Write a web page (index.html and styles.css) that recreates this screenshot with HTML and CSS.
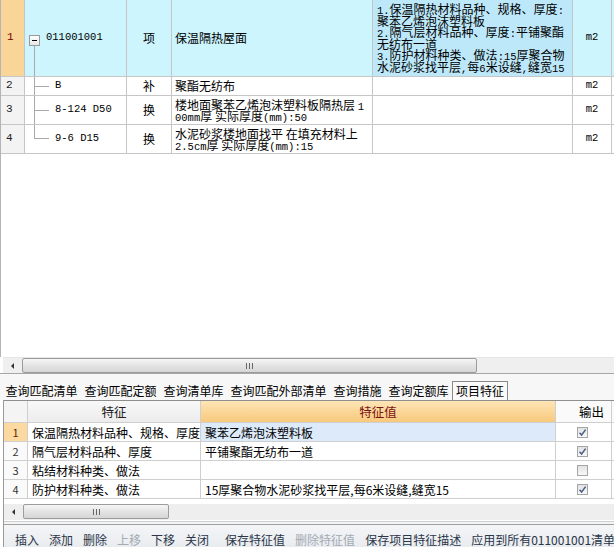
FILE: index.html
```html
<!DOCTYPE html>
<html lang="zh-CN">
<head>
<meta charset="utf-8">
<title>项目特征</title>
<link rel="stylesheet" href="styles.css">
</head>
<body>
<div class="win">
  <div class="upper">
    <div class="grid1">
      <div class="c num r1 hl">1</div>
      <div class="c code r1 sel"><span class="tree first"><span class="box"></span></span><span class="en">011001001</span></div>
      <div class="c type r1 sel">项</div>
      <div class="c name r1 sel">保温隔热屋面</div>
      <div class="c feat r1 selv"><div class="txt"><span class="en">1.</span>保温隔热材料品种、规格、厚度<span class="en">:</span><br>聚苯乙烯泡沫塑料板<br><span class="en">2.</span>隔气层材料品种、厚度<span class="en">:</span>平铺聚酯<br>无纺布一道<br><span class="en">3.</span>防护材料种类、做法<span class="en">:15</span>厚聚合物<br>水泥砂浆找平层<span class="en">,</span>每<span class="en">6</span>米设缝<span class="en">,</span>缝宽<span class="en">15</span></div></div>
      <div class="c unit r1 sel"><span class="en">m2</span></div>
      <div class="c extra r1 sel"></div>

      <div class="c num">2</div>
      <div class="c code sub"><span class="tree mid"></span><span class="en">B</span></div>
      <div class="c type">补</div>
      <div class="c name">聚酯无纺布</div>
      <div class="c feat"></div>
      <div class="c unit"><span class="en">m2</span></div>
      <div class="c extra"></div>

      <div class="c num">3</div>
      <div class="c code sub"><span class="tree mid"></span><span class="en">8-124 D50</span></div>
      <div class="c type">换</div>
      <div class="c name"><div class="txt">楼地面聚苯乙烯泡沫塑料板隔热层 <span class="en">1</span><br><span class="en">00mm</span>厚 实际厚度<span class="en">(mm):50</span></div></div>
      <div class="c feat"></div>
      <div class="c unit"><span class="en">m2</span></div>
      <div class="c extra"></div>

      <div class="c num">4</div>
      <div class="c code sub"><span class="tree last"></span><span class="en">9-6 D15</span></div>
      <div class="c type">换</div>
      <div class="c name"><div class="txt">水泥砂浆楼地面找平 在填充材料上<br><span class="en">2.5cm</span>厚 实际厚度<span class="en">(mm):15</span></div></div>
      <div class="c feat"></div>
      <div class="c unit"><span class="en">m2</span></div>
      <div class="c extra"></div>
    </div>
  </div>

  <div class="hscroll top-scroll">
    <div class="arrow"><span class="tri"></span></div>
    <div class="thumb wide"><span class="grip"></span></div>
    <div class="track"></div>
  </div>
  <div class="sep"></div>

  <div class="tabs">
    <span class="tab">查询匹配清单</span>
    <span class="tab">查询匹配定额</span>
    <span class="tab">查询清单库</span>
    <span class="tab">查询匹配外部清单</span>
    <span class="tab">查询措施</span>
    <span class="tab">查询定额库</span>
    <span class="tab active">项目特征</span>
  </div>

  <div class="panel">
    <div class="grid2">
      <div class="h hnum"></div>
      <div class="h hfeat">特征</div>
      <div class="h hval">特征值</div>
      <div class="h hout">输出</div>
      <div class="h hext"></div>

      <div class="d dnum cur">1</div>
      <div class="d dfeat">保温隔热材料品种、规格、厚度</div>
      <div class="d dval cursel">聚苯乙烯泡沫塑料板</div>
      <div class="d dout"><span class="chk on"><svg viewBox="0 0 11 11" width="11" height="11"><path d="M2.5 5.8 L4.6 8 L8.6 2.6" fill="none" stroke="#4b5f86" stroke-width="1.5"/></svg></span></div>
      <div class="d dext"></div>

      <div class="d dnum">2</div>
      <div class="d dfeat">隔气层材料品种、厚度</div>
      <div class="d dval">平铺聚酯无纺布一道</div>
      <div class="d dout"><span class="chk on"><svg viewBox="0 0 11 11" width="11" height="11"><path d="M2.5 5.8 L4.6 8 L8.6 2.6" fill="none" stroke="#4b5f86" stroke-width="1.5"/></svg></span></div>
      <div class="d dext"></div>

      <div class="d dnum">3</div>
      <div class="d dfeat">粘结材料种类、做法</div>
      <div class="d dval"></div>
      <div class="d dout"><span class="chk"></span></div>
      <div class="d dext"></div>

      <div class="d dnum">4</div>
      <div class="d dfeat">防护材料种类、做法</div>
      <div class="d dval">15厚聚合物水泥砂浆找平层,每6米设缝,缝宽15</div>
      <div class="d dout"><span class="chk on"><svg viewBox="0 0 11 11" width="11" height="11"><path d="M2.5 5.8 L4.6 8 L8.6 2.6" fill="none" stroke="#4b5f86" stroke-width="1.5"/></svg></span></div>
      <div class="d dext"></div>
    </div>

    <div class="gap"></div>
    <div class="hscroll bottom-scroll">
      <div class="arrow"><span class="tri"></span></div>
      <div class="thumb narrow"><span class="grip"></span></div>
      <div class="track"></div>
    </div>
    <div class="sep2"></div>

    <div class="toolbar">
      <span class="btn">插入</span>
      <span class="btn">添加</span>
      <span class="btn">删除</span>
      <span class="btn off">上移</span>
      <span class="btn">下移</span>
      <span class="btn">关闭</span>
      <span class="bar"></span>
      <span class="btn">保存特征值</span>
      <span class="btn off">删除特征值</span>
      <span class="btn">保存项目特征描述</span>
      <span class="btn">应用到所有011001001清单</span>
    </div>
  </div>
</div>
</body>
</html>
```

FILE: styles.css
```css
* { box-sizing: border-box; }
html, body { margin: 0; padding: 0; }
body {
  width: 614px;
  height: 547px;
  overflow: hidden;
  background: #ffffff;
  font-family: "Noto Sans CJK SC", "Noto Sans", sans-serif;
  font-size: 12px;
  color: #000;
}
.win { width: 614px; height: 547px; overflow: hidden; }

/* ---------- upper grid ---------- */
.upper {
  height: 357px;
  border-left: 1px solid #b4b4b4;
  overflow: hidden;
  background: #fff;
}
.grid1 {
  display: grid;
  grid-template-columns: 24px 102px 45px 201px 200px 39px 40px;
  grid-template-rows: 77px 19px 29px 29px;
  width: 651px;
}
.c {
  border-right: 1px solid #c6c6c6;
  border-bottom: 1px solid #c6c6c6;
  display: flex;
  align-items: center;
  line-height: 11.5px;
  white-space: nowrap;
  overflow: hidden;
  position: relative;
}
.txt { display: block; }
.en { font-family: "Liberation Mono", "DejaVu Sans Mono", monospace; font-size: 10.5px; }
.txt .en { line-height: 0; }
.num { background: #f3f3f3; padding-left: 5px; font-family: "Liberation Mono", monospace; font-size: 11px; color: #222; }
.num.hl { background: #f9d597; color: #7a0000; padding-left: 6px; }
.sel { background: #ccf5fe; }
.selv { background: #bce8fa; }
.code { padding-left: 21px; }
.code.sub { padding-left: 30px; }
.type { justify-content: center; }
.name { padding-left: 3px; }
.feat { padding-left: 4px; }
.feat .txt { margin-top: -1px; }
.unit { justify-content: center; }

/* tree lines */
.tree { position: absolute; left: 0; top: 0; width: 26px; height: 100%; }
.tree::before, .tree::after { content: ""; position: absolute; background: #a9a9a9; }
.tree.first::before { left: 9px; top: 45px; bottom: 0; width: 1px; }
.tree.mid::before { left: 9px; top: 0; bottom: 0; width: 1px; }
.tree.last::before { left: 9px; top: 0; height: 13px; width: 1px; }
.tree.mid::after { left: 9px; top: 50%; width: 15px; height: 1px; }
.tree.last::after { left: 9px; top: 13px; width: 15px; height: 1px; }
.box {
  position: absolute;
  left: 4px; top: 35px;
  width: 11px; height: 11px;
  border: 1px solid #9a9a9a;
  background: linear-gradient(#ffffff, #e6e6e6);
}
.box::after {
  content: ""; position: absolute;
  left: 2px; top: 4px; width: 5px; height: 1px; background: #000;
}

/* ---------- scrollbars ---------- */
.hscroll {
  display: flex;
  height: 16px;
  background: #efefef;
  border-top: 1px solid #e6e6e6;
}
.top-scroll { margin-left: 3px; }
.arrow { width: 19px; display: flex; align-items: center; justify-content: center; }
.tri {
  width: 0; height: 0;
  border-top: 3px solid transparent;
  border-bottom: 3px solid transparent;
  border-right: 3px solid #333;
}
.thumb {
  height: 15px;
  border: 1px solid #9c9c9c;
  border-radius: 2px;
  background: linear-gradient(#f6f6f6, #e4e4e4 50%, #d6d6d6);
  display: flex; align-items: center; justify-content: center;
}
.thumb.wide { width: 455px; }
.thumb.narrow { width: 146px; }
.grip {
  width: 7px; height: 6px;
  background:
    linear-gradient(#666, #666) 0 0 / 1px 6px no-repeat,
    linear-gradient(#666, #666) 3px 0 / 1px 6px no-repeat,
    linear-gradient(#666, #666) 6px 0 / 1px 6px no-repeat;
}
.track { flex: 1; }
.sep { height: 2px; border-top: 1px solid #a6a6a6; background: #f8f8f8; }

/* ---------- tabs ---------- */
.tabs {
  height: 25px;
  padding: 6px 0 0 2px;
  display: flex;
  background: #f7f7f7;
  white-space: nowrap;
}
.tab { padding: 0 3.5px; line-height: 19px; height: 19px; }
.tab.active {
  border: 1px solid #8a8a8a;
  border-bottom: none;
  background: #fafafa;
  padding: 0 3px;
  line-height: 18px;
}

/* ---------- lower panel ---------- */
.panel {
  margin-left: 3px;
  border-left: 1px solid #9a9a9a;
  border-top: 1px solid #8e8e8e;
  height: 147px;
  background: #fff;
}
.grid2 {
  display: grid;
  grid-template-columns: 24px 173px 355px 56px 40px;
  grid-template-rows: 22px 19px 19px 19px 19px;
  width: 648px;
}
.h, .d {
  border-right: 1px solid #cfcfcf;
  border-bottom: 1px solid #cfcfcf;
  display: flex;
  align-items: center;
  white-space: nowrap;
  overflow: hidden;
}
.h { justify-content: center; font-size: 12.5px; }
.hnum { background: #f4f4f4; }
.hfeat { background: linear-gradient(#f8f8f8, #ececec); color: #222; }
.hval { background: linear-gradient(#fde5b6, #f8c97d); color: #7a1414; }
.hout { background: #fafafa; justify-content: flex-end; padding-right: 7px; }
.hext { background: #fafafa; }
.d { padding-left: 4px; }
.dnum { justify-content: center; padding-left: 0; font-size: 11px; color: #333; background: #fafafa; }
.dnum.cur { background: #fcd9a0; color: #5a2a00; }
.cursel { background: #dceafa; }
.dout { justify-content: center; padding-left: 0; padding-right: 2px; }
.chk {
  width: 11px; height: 11px;
  border: 1px solid #a5a5a5;
  background: linear-gradient(#e2e2e2, #f8f8f8);
  display: block;
  position: relative;
}
.chk svg { position: absolute; left: -1px; top: -1px; }

.gap { height: 5px; }
.bottom-scroll { border-top: none; background: #eeeeee; }
.sep2 { height: 4px; border-top: 1px solid #cfcfcf; border-bottom: 1px solid #a0a0a0; background: #f4f4f4; margin-top: 1px; }

.toolbar {
  height: 30px;
  display: flex;
  align-items: center;
  padding-left: 6px;
  background: linear-gradient(#f3f5f7, #e6e9ed);
  color: #2a3548;
  white-space: nowrap;
}
.btn { padding: 0 5px; line-height: 30px; }
.btn.off { color: #a3aab3; }
.bar { width: 1px; height: 16px; background: #a9b0b8; margin: 0 3px; }
```
